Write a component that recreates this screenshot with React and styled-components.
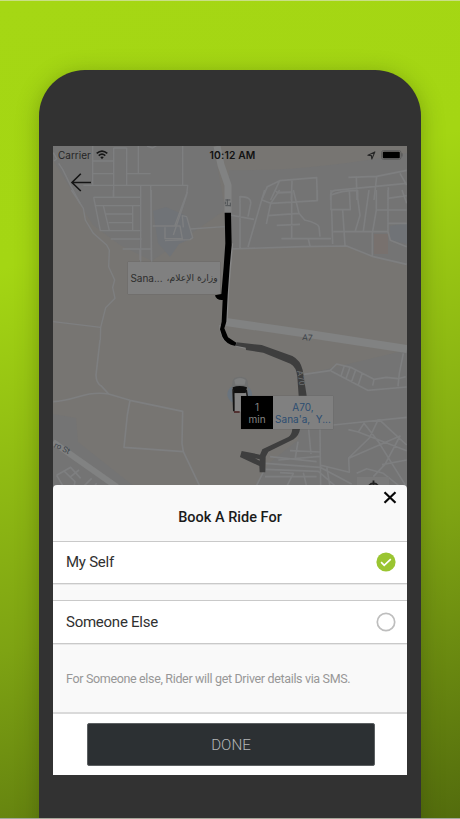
import React, { useState } from "react";
import styled, { createGlobalStyle } from "styled-components";

const GlobalStyle = createGlobalStyle`
  * { box-sizing: border-box; }
  body { margin: 0; overflow: hidden; font-family: Roboto, sans-serif; }
  button { font: inherit; border: 0; padding: 0; background: none; cursor: pointer; }
`;

const Backdrop = styled.main`
  height: 819px;
  padding: 69px 39px 0;
  overflow: hidden;
  border-top: 1px solid #c9df86;
  border-bottom: 1px solid #a5a99c;
  background: linear-gradient(163deg, #a5d714 0%, #a4d613 28%, #7ea313 68%, #536c0d 100%);
`;

const Phone = styled.section`
  height: 850px;
  padding: 76px 14px 0;
  border-radius: 46px 46px 0 0;
  background: #323232;
  box-shadow: 0 4px 22px rgba(40, 60, 0, 0.34);
`;

const Screen = styled.div`
  position: relative;
  display: flex;
  flex-direction: column;
  height: 629px;
  overflow: hidden;
  background: #777572;
`;

const MapCanvas = styled.svg`
  position: absolute;
  top: 0;
  left: 0;
  display: block;
`;

const MapArea = styled.div`
  position: relative;
  flex: 0 0 339px;
`;

const StatusBar = styled.header`
  position: relative;
  display: grid;
  grid-template-columns: 1fr auto 1fr;
  align-items: center;
  height: 18px;
  padding: 0 4px 0 5px;
  color: #111;
  font: 10px Inter, sans-serif;
`;

const StatusGroup = styled.div`
  display: flex;
  align-items: center;
  gap: ${(p) => p.$gap}px;
  justify-content: ${(p) => (p.$end ? "flex-end" : "flex-start")};
  color: #242424;
`;

const Clock = styled.span`
  font-weight: 600;
  font-size: 10.3px;
  letter-spacing: 0.15px;
  padding-left: 4px;
`;

const BackButton = styled.button`
  position: relative;
  display: block;
  width: 22px;
  height: 20px;
  margin: 8px 0 0 17px;
`;

const PlaceLabel = styled.div`
  position: absolute;
  left: ${(p) => p.$x}px;
  top: ${(p) => p.$y}px;
  display: flex;
  width: ${(p) => p.$w}px;
  height: ${(p) => p.$h}px;
  background: #808080;
  box-shadow: 0 0 1px rgba(0, 0, 0, 0.25);
  font: 10px/12px Inter, "DejaVu Sans", sans-serif;
`;

const PlaceName = styled.div`
  flex: 1;
  display: flex;
  align-items: center;
  justify-content: center;
  gap: ${(p) => p.$gap || 0}px;
  text-align: center;
  white-space: pre;
  color: ${(p) => (p.$blue ? "#2c4d71" : "#2d2d2d")};
`;

const ArabicName = styled.bdi`
  font: 9.2px/12px "DejaVu Sans", sans-serif;
`;

const Eta = styled(PlaceName)`
  flex: 0 0 32px;
  background: #000;
  color: #858585;
`;

const Sheet = styled.section`
  position: relative;
  flex: 1;
  display: flex;
  flex-direction: column;
  border-radius: 4px 4px 0 0;
  background: #f9f9f9;
`;

const SheetHeader = styled.div`
  position: relative;
  display: flex;
  align-items: center;
  justify-content: center;
  height: 56px;
  padding-top: 9px;
`;

const Title = styled.h1`
  margin: 0;
  color: #1b1b1b;
  font-size: 14.5px;
  font-weight: 500;
  line-height: 18px;
`;

const CloseButton = styled.button`
  position: absolute;
  top: 5px;
  right: 10px;
  width: 14px;
  height: 14px;
`;

const OptionRow = styled.button`
  display: flex;
  align-items: center;
  justify-content: space-between;
  height: ${(p) => p.$height}px;
  padding: 0 11.5px ${(p) => p.$lift || 0}px 13px;
  border-top: 1px solid #c9c9c9;
  border-bottom: 1px solid #c9c9c9;
  background: #fff;
  box-shadow: 0 1px 0 #e8e8e8;
  color: #303030;
  font-size: 15px;
  letter-spacing: -0.25px;
  text-align: left;
`;

const Spacer = styled.div`
  height: 16px;
`;

const Hint = styled.p`
  display: flex;
  align-items: center;
  height: 68px;
  margin: 0;
  padding: 1px 13px 0;
  color: #979797;
  font-size: 12.5px;
  letter-spacing: -0.34px;
  white-space: nowrap;
`;

const Footer = styled.footer`
  flex: 1;
  padding: 9px 32px 0 34px;
  border-top: 2px solid #dadada;
  background: #fff;
`;

const DoneButton = styled.button`
  display: block;
  width: 100%;
  height: 43px;
  border: 1px solid #5c6062;
  border-radius: 2px;
  background: #2c3033;
  color: #b5b7b8;
  font-size: 15.2px;
  font-weight: 300;
`;

function WifiIcon() {
  return (
    <svg width="12" height="10" viewBox="0 0 12 10" fill="none" stroke="#161616">
      <path d="M.7 3.4Q6-1.3 11.3 3.4" strokeWidth="1.6" />
      <path d="M2.7 5.6Q6 2.7 9.3 5.6" strokeWidth="1.5" />
      <path d="M4.2 7.1Q6 5.7 7.8 7.1L6 9.2Z" fill="#161616" stroke="none" />
    </svg>
  );
}

function LocationIcon() {
  return (
    <svg width="9" height="9" viewBox="0 0 9 9">
      <path d="M.9 4.2L7.9.9 4.8 8 4.4 4.6Z" fill="none" stroke="#252525" strokeWidth="1.1" strokeLinejoin="round" />
    </svg>
  );
}

function BatteryIcon() {
  return (
    <svg width="22" height="10" viewBox="0 0 22 10">
      <rect x=".5" y=".5" width="19.5" height="9" rx="2.2" fill="none" stroke="#5e5e5e" />
      <rect x="1.8" y="1.7" width="17" height="6.6" rx="1" fill="#000" />
      <path d="M21 3.3v3.2" stroke="#555" />
    </svg>
  );
}

function RadioMark({ checked }) {
  return (
    <svg width="20" height="20" viewBox="0 0 20 20">
      {checked ? (
        <>
          <circle cx="10" cy="10" r="9.6" fill="#9ac531" />
          <path d="M5.1 10.2l3.1 3.1 6.6-6.2" fill="none" stroke="#fff" strokeWidth="1.7" />
        </>
      ) : (
        <circle cx="10" cy="10" r="8.7" fill="#fff" stroke="#bebebe" strokeWidth="1.7" />
      )}
    </svg>
  );
}

/* Each street group is drawn at three units per pixel from its own corner. */
const STREETS = [
  {
    origin: [30, 60],
    width: 6,
    d: "M70 278L80 296 72 303M86 310L98 328 120 373 137 405 150 430M188 258V375M188 303H251M188 341H251M251 263V375M251 264H290M290 263V375M325 258V341M290 341H362M351 258L368 264 379 257M458 258V374M160 376H473L470 405 430 525M190 412H332M251 376V412M332 376V610M362 376L365 610",
  },
  {
    origin: [50, 190],
    width: 6,
    d: "M64 0L76 18 100 55 106 90 130 130 170 165 178 180 176 230 194 270 188 292 195 325 167 353 152 412 151 450M10 395L152 412M131 22H272M131 22L151 122H274M190 0V20M135 47H272M160 47L178 122M168 72H248M176 98H248M248 47V122M182 147H275M218 177H302M270 177V210M304 0V210M308 108H390L397 146H345V112M375 106L412 5M420 117L524 110M345 152L420 149 428 143 410 80 397 77 400 112",
  },
  {
    origin: [230, 60],
    width: 7,
    d: "M95 420L112 380 149 362 260 353 262 420M149 362L122 420M186 362L184 420M140 397H187M355 352L440 349 530 331M379 352L381 420M440 350L432 420M302 420V404Q303 393 315 391L530 370M475 382V420M510 340L530 375",
  },
  {
    origin: [230, 190],
    width: 7,
    d: "M0 177L220 170 350 168 430 200 530 223M30 18V174M30 20Q65 20 62 41L54 80M0 75L72 88M104 0L95 30 54 171M96 30L122 40 262 32V0M149 0L122 40 109 102M112 77L207 70M134 0L143 9 185 6V145M140 106L210 103M190 0L207 70 224 90Q265 100 267 111L270 140M154 146H303M235 147L240 168M303 0V59H361L358 0M303 15Q340 0 383 2V25L390 76 376 122M305 60L308 162M338 60L345 166M310 125H474V0M417 0L400 123M439 0L439 60 427 130V200M439 60H530M474 25L530 17M474 100H530M474 125L481 151 530 170M516 0L530 40",
  },
  {
    origin: [50, 340],
    width: 7,
    d: "M150 0L138 105Q139 130 153 137L176 162M10 185Q37 184 85 170 135 155 176 162L240 181 398 214 396 310 400 335 450 440M240 181L232 225 222 322 400 335M20 406L62 382 92 415M20 406L40 440M42 393L75 425 70 450M87 390L62 410M125 415L100 440M140 430L128 445",
  },
  {
    origin: [230, 340],
    width: 7,
    d: "M216 104L300 92 320 72 362 82 432 118 428 137M303 93L413 151 530 141M343 77L333 108M360 82L348 116M377 90L364 127M397 98L384 137M432 118L469 112 504 116 527 110M504 139L508 100 520 40M236 268L243 342M270 268L272 440M310 255L530 232M355 269L385 276 402 250 445 305 527 437M385 276L530 332M445 238L418 294 356 354 358 397 270 375M358 354L510 288 465 373 430 410M447 238L492 280 530 315M145 360L270 349M180 332L270 336M204 305L195 360M106 370L270 382 365 432M106 388L265 394 330 450M100 396L78 440M150 398L190 400 170 440M220 398L230 440M105 410H260M290 380L300 440M380 400L410 386 460 400 510 440M456 374L530 360M120 350L260 365",
  },
];

function CityMap() {
  return (
    <MapCanvas width="354" height="345" viewBox="53 146 354 345">
      <rect x="53" y="146" width="354" height="345" fill="#777572" />
      <g fill="#747474">
        <path d="M53 146H214L225 210 152 261 120 245 93 225 53 160Z" />
        <path d="M229 170Q310 172 407 153V264L373 257 347 246 229 249Z" />
        <path d="M302 375L407 350V491H253L268 464 298 440Z" />
        <path d="M53 414L76 418 78 442 140 491H53Z" />
      </g>
      <path d="M153 211L166 207 187 216 192 238 179 244 170 257 158 243Z" fill="#707377" />
      <path d="M390 226L407 223V244L390 240Z" fill="#707377" />
      <path d="M374 234H388V254H374Z" fill="#78716e" />
      {STREETS.map((s) => (
        <g key={s.origin.join()} transform={`translate(${s.origin.join(" ")}) scale(.33333)`}>
          <path d={s.d} fill="none" stroke="#7e7f80" strokeWidth={s.width * 0.7} strokeLinejoin="round" />
        </g>
      ))}
      <g fill="none" stroke="#818282">
        <path d="M217 146L221 165 228 185V213" strokeWidth="7" />
        <path d="M226 322L309 334 407 349" strokeWidth="8" />
        <path d="M53 442L117 487" strokeWidth="6" />
      </g>
      <g transform="translate(205 190) scale(.33333)">
        <path d="M82 160L70 300 65 400M46 405Q44 420 56 446 70 462 120 474" fill="none" stroke="#888" strokeWidth="5" />
        <path d="M59 68H78L80 165 74 230 68 315 64 395 58 415 69 442 94 458 91 468Q62 462 52 440L45 418 50 395 53 330Q33 331 30 316L49 312 56 230 61 160Z" fill="#000" />
        <path d="M95 457L170 465 262 498Q286 510 293 540L305 617H281L277 560Q274 530 256 521L175 488 123 480V473L92 467Z" fill="#3e3e3e" />
        <path d="M285 717Q283 735 266 748L190 785 182 800 181 847H164L163 828 105 801 110 783 165 794 172 778 250 741Q260 735 262 717Z" fill="#3e3e3e" />
        <path d="M150 805L164 808V812Z" fill="#777572" />
        <ellipse cx="104" cy="613" rx="37" ry="30" fill="#6a747e" />
        <path d="M83 574Q84 561 104 560 126 561 128 574L130 590 125 635H84L80 590Z" fill="#707171" />
        <path d="M88 570Q105 558 122 570L119 584H91Z" fill="#7e7f7f" />
        <path d="M83 592Q104 584 126 592L122 609H86Z" fill="#101010" />
        <path d="M82 595L89 609 91 664H84Z" fill="#151515" />
        <path d="M89 610H124V665H89Z" fill="#858585" />
        <path d="M124 600L127 620" stroke="#151515" strokeWidth="4" />
        <path d="M87 666H104" stroke="#4b2525" strokeWidth="5" />
        <path d="M61 30H76M61 47H76M61 35V43M67 28V45M76 38V49" fill="none" stroke="#505356" strokeWidth="3" />
      </g>
      <g fontFamily="Roboto" fontSize="8.5" fill="#394149">
        <text x="302" y="340" transform="rotate(5 302 340)">A7</text>
        <text x="53.5" y="447" fontSize="8" transform="rotate(25 53.5 447)">ro St</text>
        <text x="297" y="371" transform="rotate(80 297 371)" fill="#6c6f71">A70</text>
      </g>
      <rect x="357" y="477" width="32" height="12" fill="#7a7a7a" />
      <path d="M368.500 486Q373.500 480.500 378.500 486M373.500 480.500V486" fill="none" stroke="#222" strokeWidth="1.800" />
    </MapCanvas>
  );
}

export default function App() {
  const [rider, setRider] = useState("self");
  return (
    <>
      <GlobalStyle />
      <Backdrop>
        <Phone>
          <Screen>
            <MapArea>
              <CityMap />
              <StatusBar>
                <StatusGroup $gap={5}>
                  Carrier
                  <WifiIcon />
                </StatusGroup>
                <Clock>10:12 AM</Clock>
                <StatusGroup $gap={5} $end>
                  <LocationIcon />
                  <BatteryIcon />
                </StatusGroup>
              </StatusBar>
              <BackButton aria-label="Back">
                <svg width="22" height="20" viewBox="0 0 22 20" fill="none" stroke="#151515" strokeWidth="1.6">
                  <path d="M21 10.500H2M10.800 1.800L2 10.500 10.800 19" />
                </svg>
              </BackButton>
              <PlaceLabel $x={75} $y={116} $w={92} $h={32}>
                <PlaceName $gap={4}>
                  <span>Sana...</span>
                  <ArabicName dir="rtl">وزارة الإعلام،</ArabicName>
                </PlaceName>
              </PlaceLabel>
              <PlaceLabel $x={188} $y={250} $w={92} $h={33}>
                <Eta>{"1\nmin"}</Eta>
                <PlaceName $blue>{"A70,\nSana'a,  Y..."}</PlaceName>
              </PlaceLabel>
            </MapArea>
            <Sheet>
              <SheetHeader>
                <Title>Book A Ride For</Title>
                <CloseButton aria-label="Close">
                  <svg width="14" height="14" viewBox="0 0 14 14" stroke="#080808" strokeWidth="2.2">
                    <path d="M1.500 1.200L12.500 11.800M12.500 1.200L1.500 11.800" />
                  </svg>
                </CloseButton>
              </SheetHeader>
              <OptionRow $height={43} $lift={1} onClick={() => setRider("self")}>
                My Self
                <RadioMark checked={rider === "self"} />
              </OptionRow>
              <Spacer />
              <OptionRow $height={44} $lift={1} onClick={() => setRider("other")}>
                Someone Else
                <RadioMark checked={rider === "other"} />
              </OptionRow>
              <Hint>For Someone else, Rider will get Driver details via SMS.</Hint>
              <Footer>
                <DoneButton>DONE</DoneButton>
              </Footer>
            </Sheet>
          </Screen>
        </Phone>
      </Backdrop>
    </>
  );
}
